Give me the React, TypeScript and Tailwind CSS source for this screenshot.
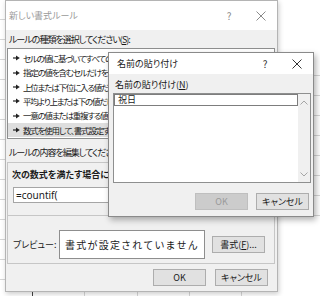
import React from "react";

const jp = "font-['Noto_Sans_CJK_JP','Noto_Sans',sans-serif] [font-feature-settings:'palt']";

function Close({ color }: { color: string }) {
  return (
    <svg width="10" height="10" viewBox="0 0 10 10">
      <path d="M0.5 0.5 L9.5 9.5 M9.5 0.5 L0.5 9.5" stroke={color} strokeWidth="1" fill="none" />
    </svg>
  );
}

function Arrow() {
  return (
    <svg width="7" height="6" viewBox="0 0 7 6" className="shrink-0">
      <path d="M0 3 H3.5" stroke="#222" strokeWidth="1.2" />
      <path d="M3 0.6 L6.8 3 L3 5.4 Z" fill="#222" />
    </svg>
  );
}

function Chevron({ up }: { up?: boolean }) {
  return (
    <svg width="8" height="5" viewBox="0 0 8 5">
      <path d={up ? "M0.5 4.5 L4 1 L7.5 4.5" : "M0.5 0.5 L4 4 L7.5 0.5"} stroke="#a6a6a6" strokeWidth="1" fill="none" />
    </svg>
  );
}

const items = [
  "セルの値に基づいてすべてのセルを書式設定",
  "指定の値を含むセルだけを書式設定",
  "上位または下位に入る値だけを書式設定",
  "平均より上または下の値だけを書式設定",
  "一意の値または重複する値だけを書式設定",
  "数式を使用して、書式設定するセルを決定",
];

const btn =
  "h-[17px] w-[53px] border border-[#adadad] bg-[#e1e1e1] flex items-center justify-center text-[9px] leading-none";

export default function App() {
  return (
    <div className={`relative w-[320px] h-[296px] overflow-hidden bg-white text-[#1a1a1a] ${jp}`}>
      {/* spreadsheet behind */}
      <div className="absolute left-0 top-0 w-[5px] h-full bg-[repeating-linear-gradient(to_bottom,transparent_0px,transparent_19px,#d6d6d6_19px,#d6d6d6_20px)]" />
      <div className="absolute left-[314px] top-[56px] w-[6px] h-[160px] bg-[repeating-linear-gradient(to_bottom,transparent_0px,transparent_19px,#d6d6d6_19px,#d6d6d6_20px)]" />
      <div className="absolute left-[32px] top-[288px] w-px h-[8px] bg-[#444]" />
      <div className="absolute left-[84px] top-[288px] w-px h-[8px] bg-[#d6d6d6]" />
      <div className="absolute left-[137px] top-[288px] w-px h-[8px] bg-[#d6d6d6]" />
      <div className="absolute left-[189px] top-[288px] w-px h-[8px] bg-[#d6d6d6]" />
      <div className="absolute left-[241px] top-[288px] w-px h-[8px] bg-[#d6d6d6]" />

      {/* main dialog */}
      <div className="absolute left-[5px] top-0 w-[273px] h-[292px] border border-[#b4b4b4] bg-[#f0f0f0] shadow-[1px_2px_5px_rgba(0,0,0,0.2)] flex flex-col">
        <div className="h-[29px] shrink-0 bg-white flex items-center">
          <span className="pl-[3px] text-[9px] text-[#9a9a9a]">新しい書式ルール</span>
          <div className="ml-auto flex items-center">
            <div className="w-[32px] flex justify-center text-[10px] text-[#8a8a8a]">?</div>
            <div className="w-[32px] flex justify-center">
              <Close color="#8a8a8a" />
            </div>
          </div>
        </div>

        <div className="flex flex-col pl-[1px]">
          <div className="mt-[4px] h-[12px] leading-[12px] pl-[2px] text-[9px] tracking-[-1px] whitespace-nowrap">
            ルールの種類を選択してください(<span className="underline">S</span>):
          </div>
          <div className="mt-[2px] h-[91px] w-[268px] border border-[#8e8f8f] bg-white pt-[2px] flex flex-col">
            {items.map((t, i) => (
              <div
                key={t}
                className={`h-[14.4px] flex items-center gap-[3px] pl-[5px] text-[8.5px] whitespace-nowrap ${
                  i === 5 ? "bg-[#dedede]" : ""
                }`}
              >
                <Arrow />
                <span className="tracking-[-1.2px]">{t}</span>
              </div>
            ))}
          </div>

          <div className="mt-[8px] h-[12px] leading-[12px] pl-[2px] text-[9px] tracking-[-1px] whitespace-nowrap">
            ルールの内容を編集してください(<span className="underline">E</span>):
          </div>

          <div className="mt-[3px] h-[102px] w-[268px] border border-[#c6c6c6] flex flex-col">
            <div className="mt-[6px] h-[12px] leading-[12px] pl-[4px] font-bold text-[9px] whitespace-nowrap">
              次の数式を満たす場合に値を書式設定(<span className="underline">O</span>):
            </div>
            <div className="mt-[6px] ml-[5px] w-[255px] h-[16px] border border-[#a5a5a5] bg-white flex items-center pl-[2px] text-[10px] font-['Noto_Sans',sans-serif]">
              =countif(
            </div>
            <div className="mt-[12px] border-t border-[#c6c6c6]" />
            <div className="mt-[14px] flex items-center pl-[5px]">
              <span className="w-[46px] text-[9px] whitespace-nowrap">プレビュー:</span>
              <div className="w-[146px] h-[29px] border border-[#8e8e8e] bg-white flex items-center justify-center text-[10px] tracking-[1.2px] [font-feature-settings:normal] whitespace-nowrap">
                書式が設定されていません
              </div>
              <div className={`ml-[7px] ${btn} h-[16px]`}>
                書式(<span className="underline">F</span>)...
              </div>
            </div>
          </div>

          <div className="mt-[5px] flex justify-end gap-[9px] pr-[9px]">
            <div className={btn}>OK</div>
            <div className={btn}>キャンセル</div>
          </div>
        </div>
      </div>

      {/* paste name dialog */}
      <div className="absolute left-[108px] top-[52px] w-[206px] h-[165px] border border-[#8a8a8a] bg-[#f0f0f0] shadow-[2px_3px_6px_rgba(0,0,0,0.3)] flex flex-col">
        <div className="h-[21px] shrink-0 bg-white flex items-center">
          <span className="pl-[8px] text-[9px]">名前の貼り付け</span>
          <div className="ml-auto flex items-center">
            <div className="w-[32px] flex justify-center text-[10px] text-[#333]">?</div>
            <div className="w-[32px] flex justify-center">
              <Close color="#333" />
            </div>
          </div>
        </div>
        <div className="mt-[5px] h-[12px] leading-[12px] pl-[6px] text-[9px] whitespace-nowrap">
          名前の貼り付け(<span className="underline">N</span>)
        </div>
        <div className="mt-[2px] ml-[4px] w-[198px] h-[90px] border border-[#8e8f8f] bg-white flex">
          <div className="flex-1">
            <div className="h-[12px] border border-[#7d7d7d] flex items-center pl-[3px] text-[9px]">祝日</div>
          </div>
          <div className="w-[12px] bg-[#f0f0f0] flex flex-col justify-between">
            <div className="h-[16px] flex items-center justify-center">
              <Chevron up />
            </div>
            <div className="h-[16px] flex items-center justify-center">
              <Chevron />
            </div>
          </div>
        </div>
        <div className="mt-[10px] flex justify-end gap-[8px] pr-[4px]">
          <div className={`${btn} !bg-[#cccccc] !border-[#bfbfbf] text-[#9a9a9a]`}>OK</div>
          <div className={btn}>キャンセル</div>
        </div>
      </div>
    </div>
  );
}
